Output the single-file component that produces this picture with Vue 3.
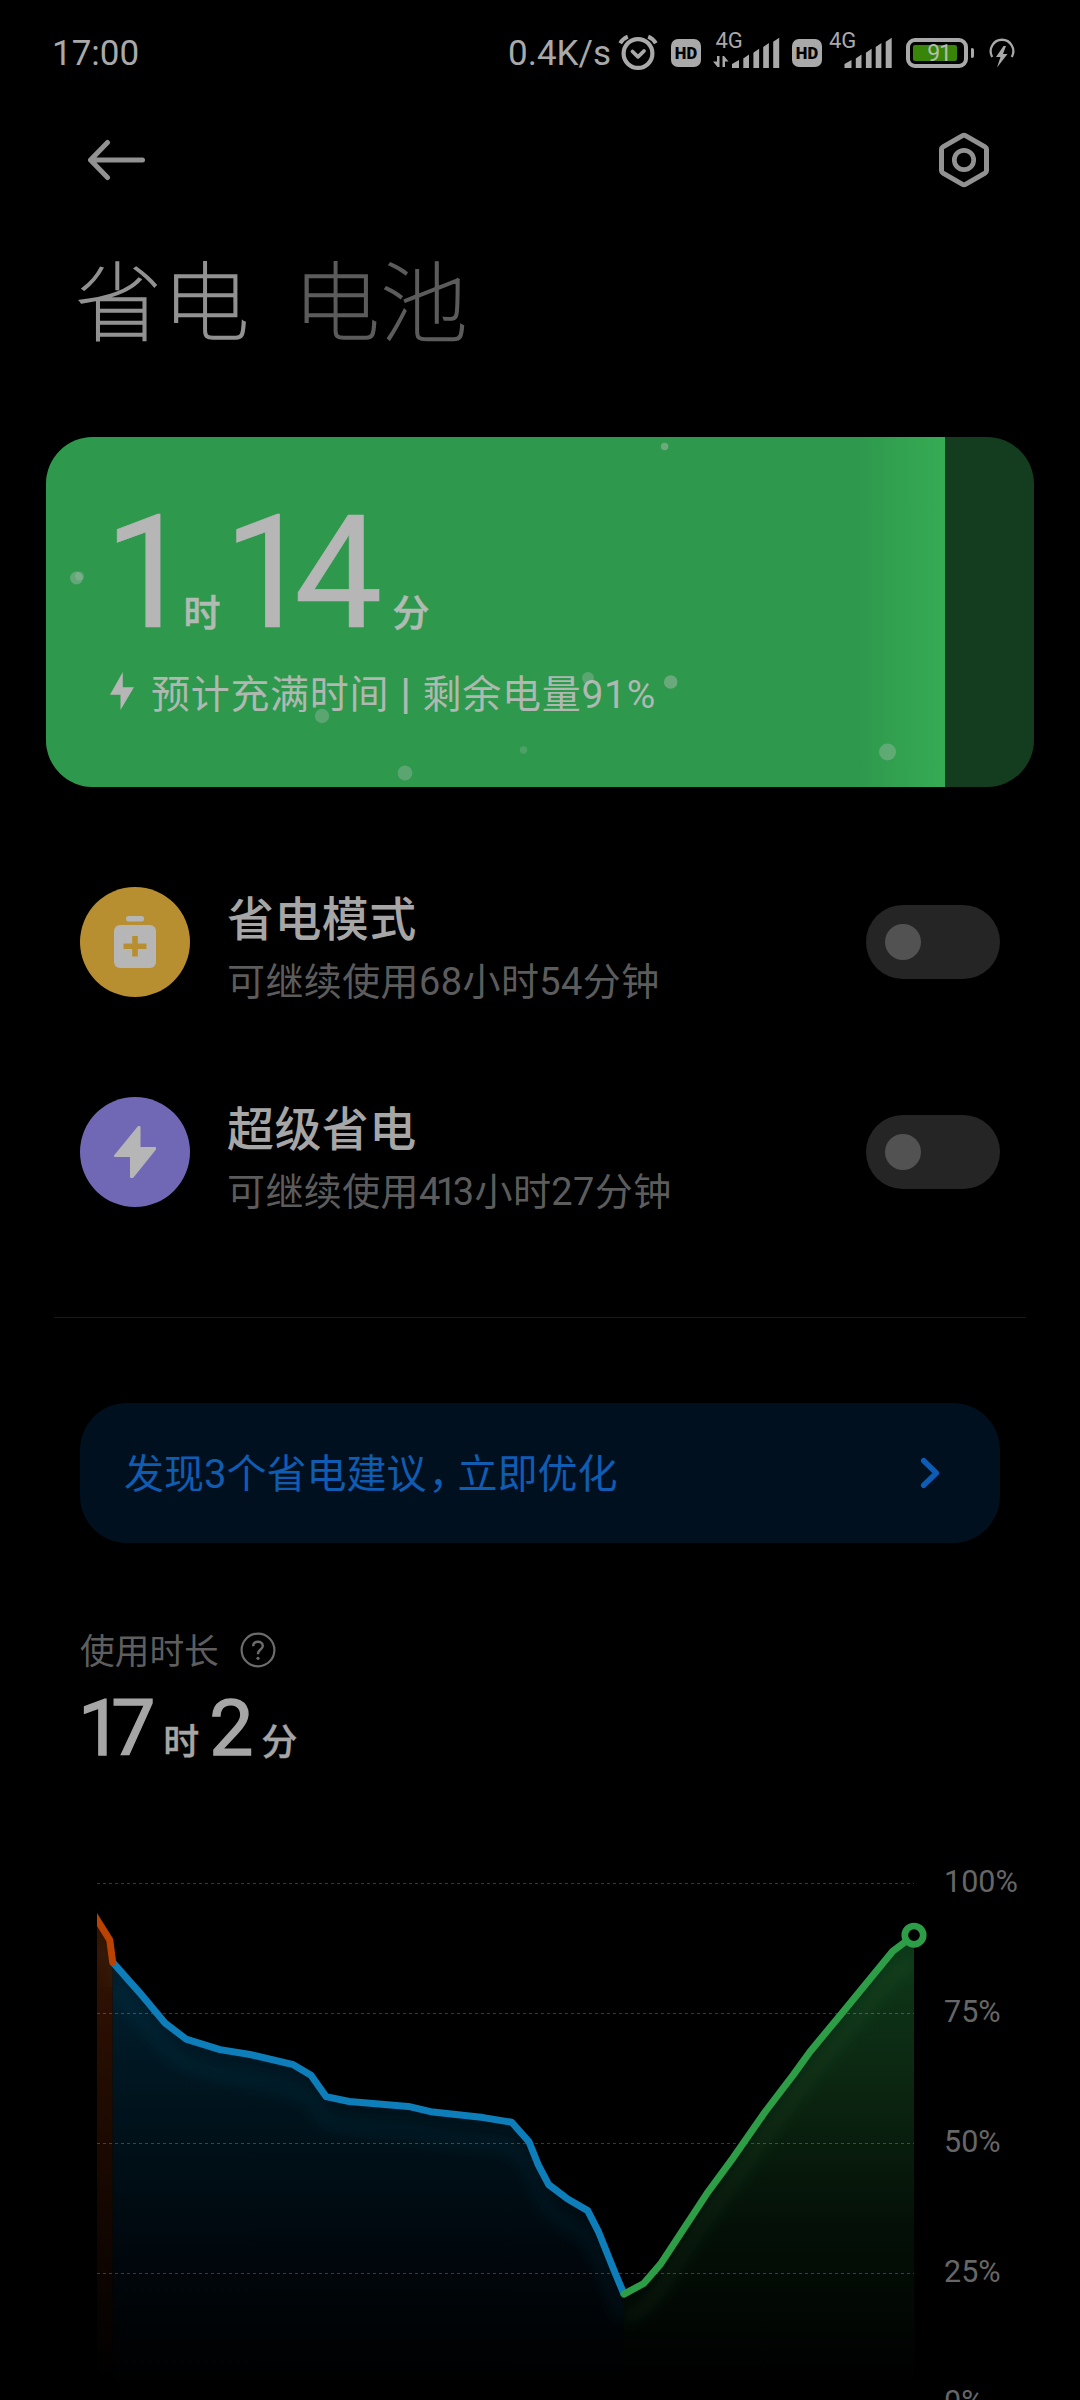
<script setup>
const modes = [
  { id: 'saver', title: '省电模式', sub: [{ t: '可继续使用68小时54分钟' }] },
  {
    id: 'ultra',
    title: '超级省电',
    sub: [{ t: '可继续使用' }, { t: '41', tight: true }, { t: '3小时27分钟' }],
  },
]

const bubbles = [
  { x: 30.5, y: 141, r: 6.5, o: 0.35 },
  { x: 33.5, y: 139, r: 4.6, o: 0.25 },
  { x: 276, y: 279, r: 7.2, o: 0.3 },
  { x: 359, y: 336, r: 7.4, o: 0.3 },
  { x: 477.5, y: 313, r: 3.7, o: 0.22 },
  { x: 618.6, y: 9.5, r: 3.7, o: 0.42 },
  { x: 542, y: 241, r: 6, o: 0.3 },
  { x: 624.7, y: 245, r: 6.8, o: 0.4 },
  { x: 841.5, y: 315, r: 8.5, o: 0.32 },
]

const bars = [
  { x: 0, w: 7, t: 27 },
  { x: 11.3, w: 5.7, t: 21.5 },
  { x: 21.4, w: 5.7, t: 15.7 },
  { x: 31.2, w: 5.7, t: 10 },
  { x: 41.2, w: 6, t: 4.7 },
]
const barPath = (b) =>
  `M${b.x} 35V${b.t + 4}L${b.x + b.w} ${b.t}V35Z`

const levels = ['100%', '75%', '50%', '25%', '0%']
const gridY = [43, 173, 303, 433]

const orange = '97,79.5 109.7,99.8 112.7,122.3'
const blue =
  '112.7,122.3 140,153.1 165,182.9 186,199.1 220,209.6 250,214.5 293.3,224.7 311,235.2 326,256.6 349.3,261.5 408.3,266.4 430.7,271.7 483.3,277.6 511.7,282.2 529,301.8 538,324.3 548.7,344.6 567.7,359 587.7,370.6 598.3,391.3 615,432.7 624,454.1'
const green =
  '624,454.1 643.7,443.5 660.7,423.9 706.7,353.8 733.3,317.6 765,272 793.3,234.9 810,211.7 841.7,173.4 892.7,111.3 914,95.2'
</script>

<template>
  <main class="screen">
    <header class="status">
      <span class="clock">17:00</span>
      <div class="status-right">
        <span class="speed">0.4K/s</span>
        <svg class="alarm" width="40" height="40" viewBox="0 0 40 40" fill="none" stroke="#a9a9a9">
          <circle cx="20" cy="20.5" r="14.4" stroke-width="4.2" />
          <path d="M2.200 10.200Q5 5.500 9.800 3.600M37.800 10.200Q35 5.500 30.200 3.600" stroke-width="4" />
          <path d="M14.500 18.500L20 23.800L26 18" stroke-width="3.800" stroke-linecap="round" stroke-linejoin="round" />
        </svg>
        <span class="hd">HD</span>
        <svg class="sig" width="67" height="60" viewBox="0 -10 67 60" fill="#a9a9a9">
          <text x="2.500" y="15" class="net">4G</text>
          <path d="M4 23H6.500V34H4.500L0 28.500H4ZM9.500 34V23H11L15.500 28.500H12V34Z" />
          <path v-for="b in bars" :key="b.x" :d="barPath(b)" transform="translate(19 0)" />
        </svg>
        <span class="hd hd2">HD</span>
        <svg class="sig2" width="64" height="60" viewBox="0 -10 64 60" fill="#a9a9a9">
          <text x="0" y="15" class="net">4G</text>
          <path v-for="b in bars" :key="b.x" :d="barPath(b)" transform="translate(15.500 0)" />
        </svg>
        <div class="battery"><div class="level"><span>91</span></div></div>
        <i class="nub"></i>
        <svg class="charge" width="28" height="32" viewBox="0 0 28 32" fill="none" stroke="#a9a9a9">
          <path d="M4.200 20A11.300 11.500 0 1 1 23.800 20" stroke-width="2.300" />
          <path d="M15.500 9L8 20H12.500L9 30.500L19.500 17H15L18 9Z" fill="#a9a9a9" stroke="none" />
        </svg>
      </div>
    </header>

    <nav class="nav">
      <svg width="60" height="42" viewBox="0 0 60 42" fill="none" stroke="#929292" stroke-width="5" stroke-linecap="round" stroke-linejoin="round">
        <path d="M56.500 21H4.500M21.500 3.500L4.500 21L21.500 38.500" />
      </svg>
      <svg width="52" height="56" viewBox="0 0 52 56" fill="none" stroke="#929292">
        <path d="M24.500 3.600Q26 2.800 27.500 3.600L47 14.800Q48.500 15.700 48.500 17.500V38.500Q48.500 40.300 47 41.200L27.500 52.400Q26 53.200 24.500 52.400L5 41.200Q3.500 40.300 3.500 38.500V17.500Q3.500 15.700 5 14.800Z" stroke-width="5" />
        <circle cx="26" cy="28" r="9.700" stroke-width="4.700" />
      </svg>
    </nav>

    <div class="tabs">
      <span class="tab on">省电</span>
      <span class="tab">电池</span>
    </div>

    <section class="card">
      <div class="charged"></div>
      <div class="card-body">
        <div class="time">
          <b class="n1">1</b><i class="u1">时</i><b class="n2"><span>1</span>4</b><i class="u2">分</i>
        </div>
        <div class="hint">
          <svg width="24" height="38" viewBox="0 0 24 38" fill="#b6b6b6">
            <path d="M12.800 0L0 22.800H10.500V38L24 15.300H12.800Z" />
          </svg>
          <span>预计充满时间<em>|</em>剩余电量91%</span>
        </div>
      </div>
      <svg class="bubbles" width="988" height="350" viewBox="0 0 988 350">
        <circle v-for="(b, i) in bubbles" :key="i" :cx="b.x" :cy="b.y" :r="b.r" fill="#c4c4c4" :fill-opacity="b.o" />
      </svg>
    </section>

    <section class="modes">
      <div v-for="m in modes" :key="m.id" class="mode">
        <span class="badge" :class="m.id">
          <svg v-if="m.id === 'saver'" width="42" height="52" viewBox="0 0 42 52">
            <rect x="12" y="0" width="18" height="5.500" rx="2.500" fill="#b6b6b6" />
            <rect y="9" width="42" height="43" rx="6" fill="#b6b6b6" />
            <path d="M21 20V40.500M9.500 30.300H32.500" stroke="#b78f30" stroke-width="5.600" />
          </svg>
          <svg v-else width="42" height="52" viewBox="0 0 42 52" fill="#b6b6b6" stroke="#b6b6b6" stroke-width="2" stroke-linejoin="round">
            <path d="M24.700 1L1 30H17V51H18.500L41 23V22H25.500V1Z" />
          </svg>
        </span>
        <div class="mode-text">
          <div class="mode-title">{{ m.title }}</div>
          <div class="mode-sub"><span v-for="s in m.sub" :key="s.t" :class="{ tight: s.tight }">{{ s.t }}</span></div>
        </div>
        <span class="toggle"><i></i></span>
      </div>
    </section>

    <hr class="rule" />

    <section class="advice">
      <span>发现3个省电建议<em>，</em>立即优化</span>
      <svg width="20" height="32" viewBox="0 0 20 32" fill="none" stroke="#0d5cb6" stroke-width="5.500" stroke-linecap="round" stroke-linejoin="round">
        <path d="M3.700 3.700L16.300 16L3.700 28.300" />
      </svg>
    </section>

    <section class="usage">
      <div class="usage-label">
        <span>使用时长</span>
        <svg width="36" height="36" viewBox="0 0 36 36" fill="none" stroke="#6c6c6c">
          <circle cx="18" cy="18" r="16.400" stroke-width="2.200" />
          <path d="M13.200 14.300C13.200 11.400 15.200 9.800 18 9.800C20.800 9.800 22.800 11.500 22.800 14C22.800 17.300 18 17.800 18 21.500V22.300" stroke-width="2.400" />
          <circle cx="18" cy="26.300" r="1.600" fill="#6c6c6c" stroke="none" />
        </svg>
      </div>
      <div class="usage-time"><b class="seven"><span class="h">1</span>7</b><i class="uh">时</i><b class="m">2</b><i class="um">分</i></div>
    </section>

    <section class="chart">
      <svg width="930" height="560" viewBox="0 0 930 560" fill="none">
        <defs>
          <linearGradient id="go" gradientUnits="userSpaceOnUse" x1="0" y1="79" x2="0" y2="545">
            <stop offset="0" stop-color="#371404" /><stop offset="0.350" stop-color="#220c01" /><stop offset="1" stop-color="#000" />
          </linearGradient>
          <linearGradient id="gb" gradientUnits="userSpaceOnUse" x1="0" y1="122" x2="0" y2="550">
            <stop offset="0" stop-color="#002030" /><stop offset="0.350" stop-color="#00131c" /><stop offset="0.700" stop-color="#00070c" /><stop offset="1" stop-color="#000" />
          </linearGradient>
          <linearGradient id="gg" gradientUnits="userSpaceOnUse" x1="0" y1="95" x2="0" y2="545">
            <stop offset="0" stop-color="#0e3a19" /><stop offset="0.300" stop-color="#0c2812" /><stop offset="0.650" stop-color="#041007" /><stop offset="1" stop-color="#000" />
          </linearGradient>
          <clipPath id="co"><polygon :points="orange + ' 112.7,560 97,560'" /></clipPath>
          <clipPath id="cb"><polygon :points="blue + ' 624,560 112.7,560'" /></clipPath>
          <clipPath id="cg"><polygon :points="green + ' 914,560 624,560'" /></clipPath>
          <clipPath id="left"><rect x="97" y="0" width="833" height="560" /></clipPath>
          <filter id="soft" filterUnits="userSpaceOnUse" x="60" y="40" width="900" height="520"><feGaussianBlur stdDeviation="7" /></filter>
        </defs>
        <polygon :points="orange + ' 112.7,560 97,560'" fill="url(#go)" />
        <polygon :points="blue + ' 624,560 112.7,560'" fill="url(#gb)" />
        <polygon :points="green + ' 914,560 624,560'" fill="url(#gg)" />
        <g stroke-width="13" stroke-opacity="0.090">
          <g clip-path="url(#co)"><polyline :points="orange" stroke="#4a7a30" transform="translate(0 25)" filter="url(#soft)" /></g>
          <g clip-path="url(#cb)"><polyline :points="blue" stroke="#1f80a8" transform="translate(0 25)" filter="url(#soft)" /></g>
          <g clip-path="url(#cg)"><polyline :points="green" stroke="#3f9a55" transform="translate(0 25)" filter="url(#soft)" /></g>
        </g>
        <path v-for="y in gridY" :key="y" :d="`M97 ${y}.5H914`" stroke="#fff" stroke-opacity="0.220" stroke-dasharray="3 3" />
        <g stroke-width="7" stroke-linejoin="round" clip-path="url(#left)">
          <polyline :points="blue" stroke="#0d7eb9" />
          <polyline points="94,74.700 97,79.500 109.700,99.800 112.700,122.300" stroke="#ba4202" stroke-linecap="round" />
          <polyline :points="green" stroke="#2d9e47" stroke-linecap="round" />
        </g>
        <circle cx="914" cy="95.200" r="9.200" fill="#000" stroke="#2d9e47" stroke-width="6.700" />
      </svg>
      <div class="levels"><span v-for="l in levels" :key="l">{{ l }}</span></div>
    </section>
  </main>
</template>

<style>
body { background: #000; }
</style>

<style scoped>
.screen {
  width: 1080px; height: 2400px; overflow: hidden; background: #000;
  font-family: Roboto, "Noto Sans CJK SC", sans-serif; color: #a6a6a6;
  display: flex; flex-direction: column; white-space: nowrap;
}
i, em { font-style: normal; }
b { font-weight: 400; }
svg { display: block; flex: none; }

.status { height: 106px; flex: none; display: flex; align-items: center; padding-left: 52px; font-size: 35px; line-height: 40px; color: #a9a9a9; }
.clock, .speed { padding-top: 1px; }
.status-right { display: flex; align-items: center; margin-left: auto; width: 572px; }
.speed { width: 110px; flex: none; }
.hd { width: 30px; height: 28px; border-radius: 7px; background: #a9a9a9; color: #000; font-size: 16.500px; font-weight: 900; line-height: 29px; text-align: center; flex: none; margin-left: 13px; }
.hd2 { margin-left: 12px; }
.sig { margin-left: 12px; }
.sig2 { margin-left: 7px; }
.net { font: 400 22px Roboto, sans-serif; }
.battery { box-sizing: border-box; width: 62px; height: 30px; border: 4px solid #a9a9a9; border-radius: 9px; padding: 3px; margin-left: 13px; flex: none; }
.level { width: 44px; height: 16px; background: #39850a; border-radius: 2px; font-size: 23px; line-height: 17px; text-align: right; }
.level span { padding-right: 6px; color: #b4bfae; letter-spacing: -1px; }
.nub { width: 3.500px; height: 10px; border-radius: 1px 2px 2px 1px; background: #a9a9a9; margin-left: 2.500px; flex: none; }
.charge { margin-left: 14px; }

.nav { height: 108px; flex: none; display: flex; align-items: center; justify-content: space-between; padding: 0 90px 0 86px; }

.tabs { display: flex; margin: 41px 0 0 75px; height: 100px; line-height: 100px; font-size: 87px; font-weight: 100; flex: none; gap: 43px; -webkit-text-stroke-width: 1.400px; }
.tab { color: #5c5c5c; letter-spacing: 0.500px; }
.tab.on { color: #929292; }

.card { position: relative; flex: none; width: 988px; height: 350px; margin: 82px 0 0 46px; border-radius: 47px; overflow: hidden; background: #143c1e; display: grid; }
.charged { grid-area: 1 / 1; width: 899px; background: linear-gradient(90deg, #2e984c 810px, #36ab54 899px); }
.card-body { grid-area: 1 / 1; padding: 56px 0 0 58px; }
.bubbles { position: absolute; left: 0; top: 0; }
.time { display: flex; align-items: baseline; height: 160px; line-height: 160px; font-size: 157.500px; color: #b6b6b6; -webkit-text-stroke-width: 0.600px; }
.time i { font-size: 37px; font-weight: 500; color: #b2bab4; }
.n1 { letter-spacing: -9px; }
.n2 { margin-left: 3px; }
.n2 span { letter-spacing: -18px; }
.u2 { margin-left: 10px; }
.hint { display: flex; align-items: center; margin: 21px 0 0 6px; height: 40px; line-height: 40px; font-size: 39px; color: #afb8b1; }
.hint svg { margin: -6px 17px 0 0; }
.hint span { letter-spacing: 0.700px; }
.hint em { margin: 0 11px; font-size: 43px; font-weight: 500; }

.modes { margin: 100px 80px 0; display: flex; flex-direction: column; gap: 100px; flex: none; }
.mode { height: 110px; display: flex; align-items: center; }
.badge { width: 110px; height: 110px; border-radius: 50%; display: flex; align-items: center; justify-content: center; flex: none; }
.saver { background: #b78f30; }
.ultra { background: #7168b5; }
.mode-text { margin-left: 37px; flex: 1; padding-top: 10px; }
.mode-title { font-size: 47px; line-height: 60px; font-weight: 500; color: #a6a6a6; margin-top: 2px; letter-spacing: 0.400px; }
.mode-sub { font-size: 38px; line-height: 48px; color: #5c5c5c; margin-top: 8px; letter-spacing: 0.400px; }
.tight { letter-spacing: -4.500px; }
.toggle { width: 134px; height: 74px; border-radius: 37px; background: #252525; display: flex; align-items: center; padding-left: 19px; box-sizing: border-box; flex: none; }
.toggle i { width: 36px; height: 36px; border-radius: 50%; background: #525252; }

.rule { width: 972px; height: 1px; border: 0; background: #1a1a1a; margin: 110px 54px 0; flex: none; }

.advice { box-sizing: border-box; margin: 85px 80px 0; height: 140px; border-radius: 47px; background: #00101f; color: #0f5cb2; flex: none; display: flex; align-items: center; justify-content: space-between; padding: 0 60px 0 44px; font-size: 40px; line-height: 44px; }
.advice span { padding-top: 4px; }
.advice em { margin-left: 2px; letter-spacing: -11px; }

.usage { margin: 87px 0 0 80px; flex: none; }
.usage-label { display: flex; height: 44px; line-height: 45px; font-size: 34.700px; color: #5e5e5e; }
.usage-label svg { margin: 1.500px 0 0 21px; }
.usage-time { display: flex; align-items: baseline; margin: 14px 0 0 -2px; height: 80px; line-height: 80px; font-size: 78.600px; }
.usage-time b { -webkit-text-stroke-width: 1.400px; }
.usage-time i { font-size: 36px; font-weight: 500; -webkit-text-stroke-width: 0.400px; }
.h { letter-spacing: -11px; }
.uh { margin-left: 8px; }
.m { margin-left: 10px; }
.um { margin-left: 8px; }

.chart { display: flex; margin-top: 72px; height: 560px; flex: none; }
.levels { display: flex; flex-direction: column; margin: 22px 0 0 14px; font-size: 30.500px; color: #666; }
.levels span { height: 129.900px; line-height: 40px; flex: none; }
</style>
